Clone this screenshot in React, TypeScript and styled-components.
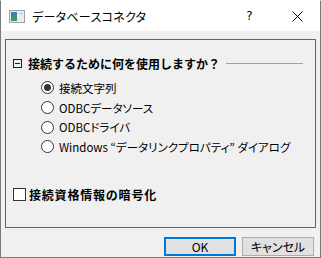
import styled, { createGlobalStyle } from 'styled-components';

const GlobalStyle = createGlobalStyle`
  html, body {
    margin: 0;
    padding: 0;
    background: #ffffff;
  }
  body {
    font-family: "Noto Sans CJK JP", "Noto Sans", sans-serif;
  }
`;

const Window = styled.div`
  width: 321px;
  height: 258px;
  box-sizing: border-box;
  border: 1px solid #7a7a7a;
  border-top-color: #ffffff;
  display: flex;
  flex-direction: column;
  background: #f0f0f0;
`;

const TitleBar = styled.div`
  height: 30px;
  flex: none;
  background: #ffffff;
  display: flex;
  align-items: center;
  padding-left: 8px;
`;

const Title = styled.span`
  margin-left: 7px;
  font-size: 12px;
  color: #000;
  font-feature-settings: "palt";
  letter-spacing: 0.3px;
`;

const TitleButton = styled.div<{ $w: number }>`
  width: ${(p) => p.$w}px;
  height: 30px;
  display: flex;
  align-items: center;
  justify-content: center;
  color: #000;
`;

const Spacer = styled.div`
  flex: 1;
`;

const Help = styled.span`
  font-family: "DejaVu Sans", sans-serif;
  font-size: 12px;
  margin-right: 3px;
`;

const Client = styled.div`
  flex: 1;
  display: flex;
  flex-direction: column;
  padding: 8px 4px 2px 4px;
`;

const Panel = styled.div`
  height: 189px;
  box-sizing: border-box;
  border: 1px solid #646464;
  padding: 0 12px 0 7px;
`;

const GroupHeader = styled.div`
  display: flex;
  align-items: center;
  height: 18px;
  margin-top: 14px;
`;

const Toggle = styled.div`
  width: 9px;
  height: 9px;
  box-sizing: border-box;
  border: 1px solid #1e1e1e;
  display: flex;
  align-items: center;
  justify-content: center;
  &::after {
    content: '';
    width: 5px;
    height: 1px;
    background: #1e1e1e;
  }
`;

const HeaderText = styled.span`
  margin-left: 6px;
  font-size: 12px;
  font-weight: bold;
  color: #000;
  white-space: nowrap;
`;

const Rule = styled.div`
  flex: 1;
  height: 1px;
  margin-left: 6px;
  background: #a0a0a0;
`;

const OptionList = styled.div`
  display: flex;
  flex-direction: column;
  margin-top: 6px;
  padding-left: 28px;
`;

const Option = styled.label`
  display: flex;
  align-items: center;
  height: 19.7px;
  font-size: 11.5px;
  color: #000;
  white-space: nowrap;
  font-feature-settings: "palt";
`;

const Radio = styled.span<{ $on?: boolean }>`
  width: 13px;
  height: 13px;
  box-sizing: border-box;
  border-radius: 50%;
  border: 1px solid #333;
  background: #fff;
  margin-right: 5px;
  display: flex;
  align-items: center;
  justify-content: center;
  &::after {
    content: '';
    width: 7px;
    height: 7px;
    border-radius: 50%;
    background: ${(p) => (p.$on ? '#333' : 'transparent')};
  }
`;

const CheckRow = styled.label`
  display: flex;
  align-items: center;
  height: 18px;
  margin-top: 29px;
`;

const CheckBox = styled.span`
  width: 13px;
  height: 13px;
  box-sizing: border-box;
  border: 1px solid #333;
  background: #fff;
  margin-right: 3px;
`;

const CheckText = styled.span`
  font-size: 12px;
  font-weight: bold;
  letter-spacing: 0.8px;
  color: #000;
`;

const Buttons = styled.div`
  display: flex;
  justify-content: flex-end;
  gap: 6px;
  margin-top: 9px;
  padding-right: 2px;
`;

const Button = styled.button<{ $default?: boolean }>`
  width: 72px;
  height: 19px;
  box-sizing: border-box;
  padding: 0;
  background: #e1e1e1;
  border: ${(p) => (p.$default ? '2px solid #0078d7' : '1px solid #adadad')};
  font-family: "Noto Sans CJK JP", sans-serif;
  font-size: 12px;
  line-height: 1;
  color: #000;
  font-feature-settings: "palt";
`;

const AppIcon = () => (
  <svg width="16" height="13" viewBox="0 0 16 13">
    <defs>
      <linearGradient id="g" x1="0" y1="0" x2="0" y2="1">
        <stop offset="0" stopColor="#3a7fb8" />
        <stop offset="1" stopColor="#3c9a5a" />
      </linearGradient>
    </defs>
    <rect x="0.5" y="0.5" width="15" height="12" fill="#e8eef0" stroke="#9aa4a8" />
    <rect x="2" y="2" width="6" height="9" fill="url(#g)" />
    <rect x="10" y="3" width="4" height="1" fill="#b8c4c8" />
  </svg>
);

const CloseIcon = () => (
  <svg width="11" height="11" viewBox="0 0 11 11">
    <path d="M0.5 0.5 L10.5 10.5 M10.5 0.5 L0.5 10.5" stroke="#000" strokeWidth="1" />
  </svg>
);

const options = [
  '接続文字列',
  'ODBCデータソース',
  'ODBCドライバ',
  'Windows “データリンクプロパティ” ダイアログ',
];

export default function App() {
  return (
    <>
      <GlobalStyle />
      <Window>
        <TitleBar>
          <AppIcon />
          <Title>データベースコネクタ</Title>
          <Spacer />
          <TitleButton $w={46}>
            <Help>?</Help>
          </TitleButton>
          <TitleButton $w={46}>
            <CloseIcon />
          </TitleButton>
        </TitleBar>
        <Client>
          <Panel>
            <GroupHeader>
              <Toggle />
              <HeaderText>接続するために何を使用しますか？</HeaderText>
              <Rule />
            </GroupHeader>
            <OptionList>
              {options.map((o, i) => (
                <Option key={o}>
                  <Radio $on={i === 0} />
                  {o}
                </Option>
              ))}
            </OptionList>
            <CheckRow>
              <CheckBox />
              <CheckText>接続資格情報の暗号化</CheckText>
            </CheckRow>
          </Panel>
          <Buttons>
            <Button $default>OK</Button>
            <Button>キャンセル</Button>
          </Buttons>
        </Client>
      </Window>
    </>
  );
}
